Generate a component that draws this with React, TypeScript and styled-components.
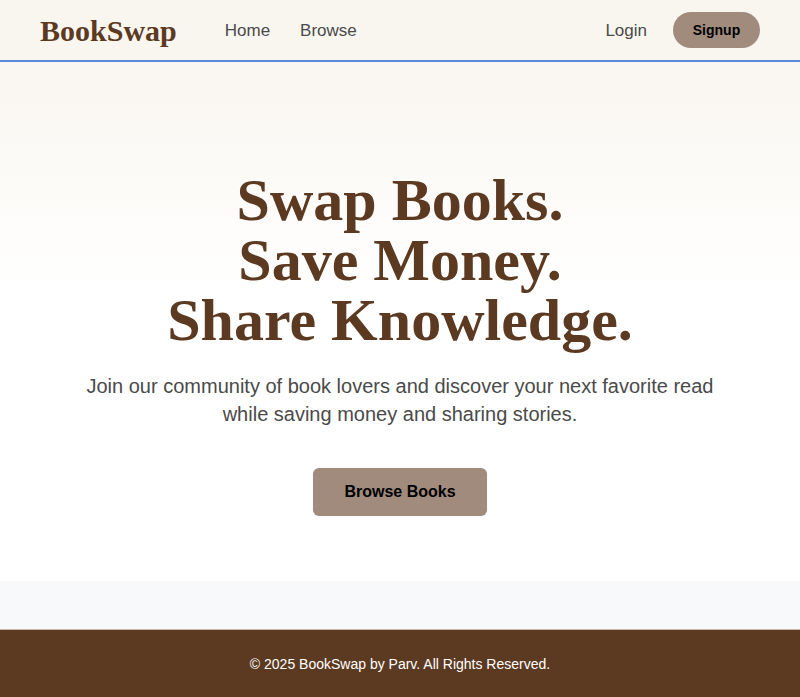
import React from "react";
import styled, { createGlobalStyle } from "styled-components";

const Global = createGlobalStyle`
  html, body { margin: 0; padding: 0; }
  body { font-family: "Liberation Sans", Arial, sans-serif; background: #ffffff; }
  * { box-sizing: border-box; }
`;

const Page = styled.div`
  display: flex;
  flex-direction: column;
  min-height: 697px;
`;

const Nav = styled.nav`
  height: 62px;
  display: flex;
  align-items: center;
  padding: 0 40px;
  background: #f9f6f0;
  border-bottom: 2px solid #5b8be0;
`;

const Logo = styled.div`
  font-family: "Liberation Serif", "Times New Roman", serif;
  font-weight: 700;
  font-size: 30px;
  color: #5c3a21;
  margin-right: 48px;
  padding-top: 2px;
`;

const NavLinks = styled.div`
  display: flex;
  gap: 30px;
  flex: 1;
`;

const NavLink = styled.a`
  font-size: 17px;
  color: #4a4a4a;
  text-decoration: none;
  padding-top: 2px;
`;

const Right = styled.div`
  display: flex;
  align-items: center;
  gap: 26px;
`;

const Signup = styled.button`
  height: 36px;
  width: 87px;
  border: none;
  border-radius: 18px;
  background: #a08b7d;
  color: #000;
  font-family: "Liberation Sans", Arial, sans-serif;
  font-weight: 700;
  font-size: 14px;
`;

const Hero = styled.section`
  height: 519px;
  display: flex;
  flex-direction: column;
  align-items: center;
  padding-top: 108px;
  background: linear-gradient(#f9f6f0, #ffffff 45%);
  text-align: center;
`;

const Title = styled.h1`
  margin: 0;
  font-family: "Liberation Serif", "Times New Roman", serif;
  font-weight: 700;
  font-size: 60px;
  line-height: 1;
  color: #5c3a21;
`;

const Sub = styled.p`
  margin: 22px 0 0;
  max-width: 660px;
  font-size: 20px;
  line-height: 28px;
  color: #4a4a4a;
`;

const Cta = styled.button`
  margin-top: 40px;
  height: 48px;
  width: 174px;
  border: none;
  border-radius: 6px;
  background: #a08b7d;
  color: #000;
  font-family: "Liberation Sans", Arial, sans-serif;
  font-weight: 700;
  font-size: 16px;
`;

const Band = styled.div`
  height: 48px;
  background: #f8f9fa;
`;

const Footer = styled.footer`
  flex: 1;
  min-height: 68px;
  display: flex;
  align-items: center;
  justify-content: center;
  background: #5c3a21;
  border-top: 1px solid #c9b6a6;
  color: #ffffff;
  font-size: 14px;
`;

export default function App() {
  return (
    <Page>
      <Global />
      <Nav>
        <Logo>BookSwap</Logo>
        <NavLinks>
          <NavLink>Home</NavLink>
          <NavLink>Browse</NavLink>
        </NavLinks>
        <Right>
          <NavLink>Login</NavLink>
          <Signup>Signup</Signup>
        </Right>
      </Nav>
      <Hero>
        <Title>
          Swap Books.
          <br />
          Save Money.
          <br />
          Share Knowledge.
        </Title>
        <Sub>
          Join our community of book lovers and discover your next favorite read while saving money and
          sharing stories.
        </Sub>
        <Cta>Browse Books</Cta>
      </Hero>
      <Band />
      <Footer>© 2025 BookSwap by Parv. All Rights Reserved.</Footer>
    </Page>
  );
}
